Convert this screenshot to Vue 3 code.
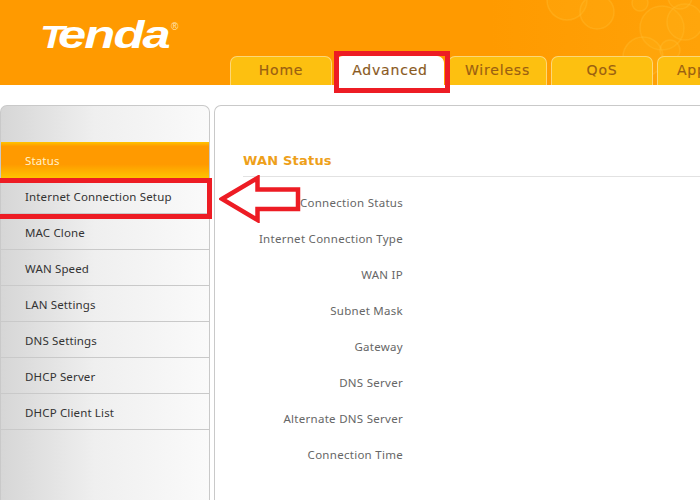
<script setup>
const tabs = [
  { label: 'Home', width: 102 },
  { label: 'Advanced', width: 108, active: true },
  { label: 'Wireless', width: 99 },
  { label: 'QoS', width: 102 },
  { label: 'Application', width: 127 },
]
const menu = ['Internet Connection Setup', 'MAC Clone', 'WAN Speed', 'LAN Settings', 'DNS Settings', 'DHCP Server', 'DHCP Client List']
const rows = ['Connection Status', 'Internet Connection Type', 'WAN IP', 'Subnet Mask', 'Gateway', 'DNS Server', 'Alternate DNS Server', 'Connection Time']
const bubbles = [
  [567, 0, 20], [597, 12, 17], [662, 28, 22], [685, 22, 18], [643, 57, 20], [670, 50, 10], [640, 3, 8], [680, -3, 12],
]
</script>

<template>
  <div class="page">
    <header class="header">
      <svg class="bubbles" width="700" height="85" viewBox="0 0 700 85">
        <circle v-for="(b, i) in bubbles" :key="i" :cx="b[0]" :cy="b[1]" :r="b[2]" fill="#ffb81c" fill-opacity="0.22" stroke="#ffc53a" stroke-opacity="0.3" stroke-width="1.500" />
      </svg>
      <div class="logo"><span class="logo-t">T</span>enda</div>
      <div class="reg">®</div>
      <nav class="tabs">
        <div v-for="t in tabs" :key="t.label" class="tab" :class="{ active: t.active }" :style="{ width: t.width + 'px' }">{{ t.label }}</div>
      </nav>
    </header>
    <main class="main">
      <aside class="side">
        <div class="item current">Status</div>
        <div v-for="m in menu" :key="m" class="item">{{ m }}</div>
      </aside>
      <section class="content">
        <h2 class="title">WAN Status</h2>
        <div v-for="r in rows" :key="r" class="row">{{ r }}</div>
      </section>
    </main>
    <div class="mark mark-tab"></div>
    <div class="mark mark-menu"></div>
    <svg class="arrow" width="84" height="48" viewBox="0 0 84 48">
      <path d="M3 24 L38.500 3 L38.500 14.500 L79 14.500 L79 34 L38.500 34 L38.500 45 Z" fill="none" stroke="#ed1c24" stroke-width="4.500" />
    </svg>
  </div>
</template>

<style scoped>
.page { position: relative; width: 700px; height: 500px; overflow: hidden; background: #fff; font-family: "Noto Sans", Verdana, sans-serif; }
.header { position: relative; height: 85px; background: linear-gradient(90deg, #ff9a00 0, #ff9a00 70%, #ffa208 100%); display: flex; align-items: flex-end; overflow: hidden; }
.bubbles { position: absolute; left: 0; top: 0; }
.logo { position: absolute; left: 40px; top: 13px; color: #fff; font: italic bold 39px "Liberation Sans", sans-serif; letter-spacing: -1.5px; transform: scaleX(1.3); transform-origin: left center; white-space: nowrap; }
.logo-t { font-size: 31px; letter-spacing: -5px; }
.reg { position: absolute; left: 171px; top: 21px; color: #ffe3b0; font: 10px "Liberation Sans", sans-serif; }
.tabs { position: relative; margin-left: 230px; display: flex; gap: 4px; flex: none; }
.tab { flex: none; height: 29px; box-sizing: border-box; background: #fdc010; border: 1px solid #fdd777; border-bottom: 0; border-radius: 7px 7px 0 0; color: #9a5f12; font-family: "DejaVu Sans", Verdana, sans-serif; font-size: 14px; -webkit-text-stroke: 0.15px currentColor; letter-spacing: 0.8px; text-align: center; line-height: 27px; white-space: nowrap; overflow: hidden; }
.tab.active { background: #fff; border-color: #fff; color: #8a5a1e; }
.main { display: flex; gap: 4px; margin-top: 20px; height: 395px; }
.side { width: 210px; flex: none; box-sizing: border-box; padding-top: 36px; border: 1px solid #c9c9c9; border-bottom: 0; border-radius: 7px 7px 0 0; background: linear-gradient(90deg, #d6d6d6 0, #efefef 45%, #fafafa 100%); }
.item { height: 36px; box-sizing: border-box; padding-left: 24px; border-bottom: 1px solid #c9c9c9; font-size: 11.5px; line-height: 37px; color: #333; letter-spacing: 0.15px; }
.item.current { border-bottom: 0; color: #fff3c8; line-height: 37px; background: linear-gradient(180deg, #ffc400 0, #ff9a00 12%, #ff9a00 62%, #ffc400 100%); }
.content { flex: 1; box-sizing: border-box; border: 1px solid #c9c9c9; border-right: 0; border-bottom: 0; border-radius: 7px 0 0 0; padding-top: 46px; }
.title { margin: 0 0 8px 28px; padding-bottom: 6px; font-family: "DejaVu Sans", Verdana, sans-serif; font-size: 13px; font-weight: 700; color: #eea01a; letter-spacing: 0.2px; line-height: 18px; border-bottom: 1px solid #e2e2e2; }
.row { width: 188px; height: 36px; line-height: 35px; text-align: right; font-size: 11.5px; color: #666; letter-spacing: 0.28px; white-space: nowrap; }
.mark { position: absolute; box-sizing: border-box; border: 5px solid #ed1c24; }
.mark-tab { left: 334px; top: 51px; width: 116px; height: 42px; }
.mark-menu { left: -5px; top: 178px; width: 217px; height: 41px; }
.arrow { position: absolute; left: 219px; top: 175px; }
</style>
